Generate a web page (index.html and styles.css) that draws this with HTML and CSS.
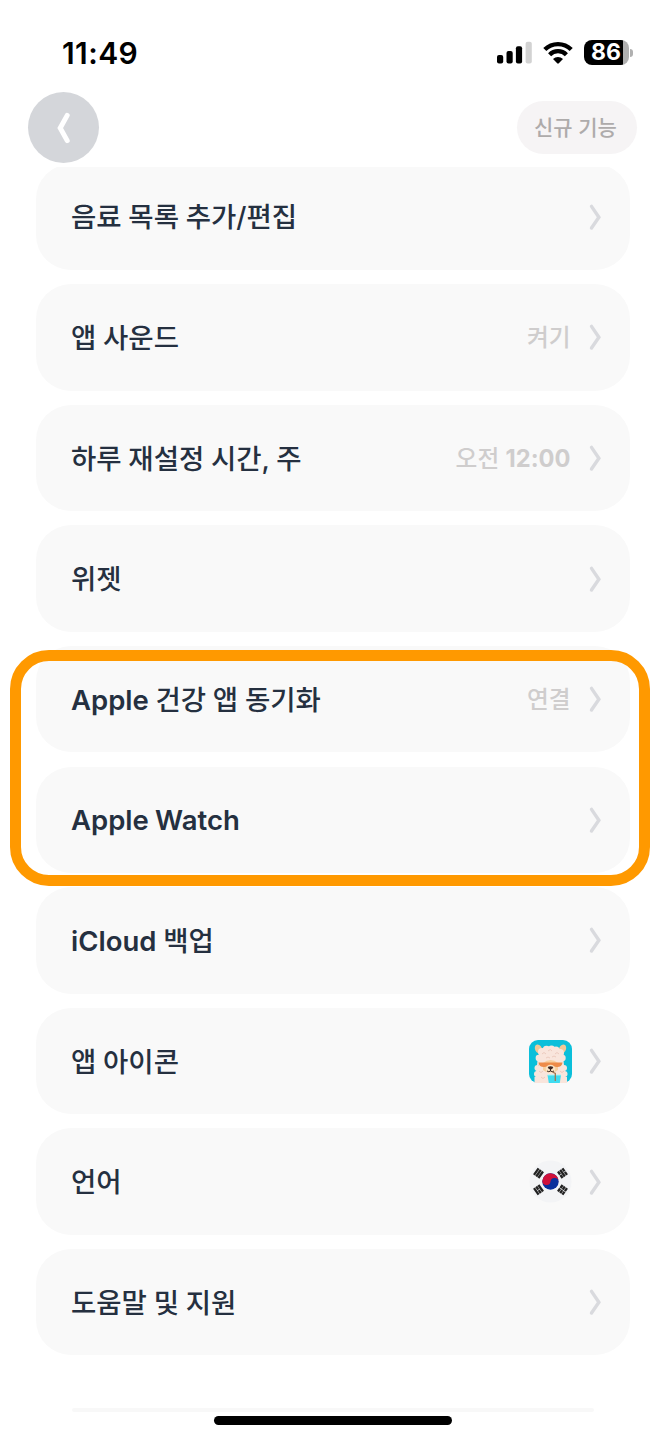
FILE: index.html
```html
<!DOCTYPE html>
<html lang="ko">
<head>
    <meta charset="UTF-8">
    <meta name="viewport" content="width=device-width, initial-scale=1.0">
    <title>설정</title>
    <link rel="stylesheet" href="styles.css">
</head>
<body>

    <!-- Shared chevron -->
    <svg class="defs" width="0" height="0">
        <symbol id="chevron" viewBox="0 0 14 28">
            <path d="M3.5 3.4 L10.9 14.2 L3.5 25" fill="none" stroke="#d9dade" stroke-width="3.4" stroke-linecap="round" stroke-linejoin="miter"/>
        </symbol>
    </svg>

    <!-- Status bar -->
    <div class="status-bar">
        <span class="time">11:49</span>
        <div class="status-icons">
            <svg class="signal" width="36" height="24" viewBox="0 0 36 24">
                <rect x="0" y="14" width="6.2" height="8.6" rx="2"/>
                <rect x="9.5" y="10" width="6.2" height="12.6" rx="2"/>
                <rect x="18.9" y="5.2" width="6.2" height="17.4" rx="2"/>
                <rect x="28.6" y="0.8" width="6.2" height="21.8" rx="2" fill="#d2d2d2"/>
            </svg>
            <svg class="wifi" width="30" height="24" viewBox="0 0 30 24">
                <path d="M1.8 8.6 C9 1.2 21 1.2 28.2 8.6" fill="none" stroke="#000" stroke-width="4.3"/>
                <path d="M6.6 13.7 C11.2 9 18.8 9 23.4 13.7" fill="none" stroke="#000" stroke-width="4.3"/>
                <path d="M10 18.1 C12.8 15.4 17.2 15.4 20 18.1 L15.8 22.3 Q15 23 14.2 22.3 Z"/>
            </svg>
            <div class="battery">86</div>
            <div class="battery-cap"></div>
        </div>
    </div>

    <!-- Header -->
    <header>
        <a class="back" href="#">
            <svg width="20" height="36" viewBox="0 0 20 36">
                <path d="M13.2 5.4 L6.2 18 L13.2 30.6" fill="none" stroke="#fff" stroke-width="5" stroke-linecap="round" stroke-linejoin="miter"/>
            </svg>
        </a>
        <a class="whats-new" href="#">신규 기능</a>
    </header>

    <!-- Settings list -->
    <main>
        <a class="row" href="#">
            <span class="label">음료 목록 추가/편집</span>
            <svg class="chevron"><use href="#chevron"/></svg>
        </a>
        <a class="row" href="#">
            <span class="label">앱 사운드</span>
            <span class="value">켜기</span>
            <svg class="chevron"><use href="#chevron"/></svg>
        </a>
        <a class="row" href="#">
            <span class="label">하루 재설정 시간, 주</span>
            <span class="value">오전 <b>12:00</b></span>
            <svg class="chevron"><use href="#chevron"/></svg>
        </a>
        <a class="row" href="#">
            <span class="label">위젯</span>
            <svg class="chevron"><use href="#chevron"/></svg>
        </a>
        <a class="row" href="#">
            <span class="label"><b>Apple</b> 건강 앱 동기화</span>
            <span class="value">연결</span>
            <svg class="chevron"><use href="#chevron"/></svg>
        </a>
        <a class="row" href="#">
            <span class="label"><b>Apple Watch</b></span>
            <svg class="chevron"><use href="#chevron"/></svg>
        </a>
        <a class="row" href="#">
            <span class="label"><b>iCloud</b> 백업</span>
            <svg class="chevron"><use href="#chevron"/></svg>
        </a>
        <a class="row" href="#">
            <span class="label">앱 아이콘</span>
            <!-- Alpaca with a drink -->
            <svg class="app-icon" viewBox="0 0 43 43">
                <rect width="43" height="43" rx="9" fill="#0bbfda"/>
                <ellipse cx="9.5" cy="9" rx="3.4" ry="4.8" fill="#f0c896" transform="rotate(-25 9.5 9)"/>
                <ellipse cx="33.5" cy="9" rx="3.4" ry="4.8" fill="#f0c896" transform="rotate(25 33.5 9)"/>
                <g fill="#f9e5dc">
                    <path d="M9 16 Q21 4 34 16 L37 43 H6 Z"/>
                    <circle cx="13" cy="12" r="4"/>
                    <circle cx="17.5" cy="9.5" r="3.8"/>
                    <circle cx="22.5" cy="9" r="3.6"/>
                    <circle cx="27" cy="10" r="3.6"/>
                    <circle cx="31" cy="13" r="4"/>
                    <circle cx="9.8" cy="18" r="3.2"/>
                    <circle cx="33.5" cy="18" r="3.2"/>
                    <circle cx="8.5" cy="28" r="3"/>
                    <circle cx="8" cy="34" r="3"/>
                    <path d="M5.5 37 H38 V43 H5.5 Z"/>
                    <circle cx="35" cy="28" r="3"/>
                    <circle cx="35.5" cy="34" r="3"/>
                </g>
                <g fill="none" stroke="#eac7bb" stroke-width="0.9">
                    <path d="M13 14 q2 -3 4 0 M19 11 q2.5 -3 4 0 M26 14 q2 -3 4 0 M17 18 q2 -2 4 0 M23 17 q2 -2 4 0"/>
                    <path d="M10 31 q2 3 4 0 M12 37 q2 3 4 0 M31 31 q2 3 4 0 M9 25.5 q1.5 -2 3 0"/>
                </g>
                <path d="M14 23 Q21.5 17 29 23 V30 Q21.5 36 14 30 Z" fill="#f7cf9e"/>
                <path d="M9.5 22.5 H33.5 Q33 27 28 27 Q24 27 21.5 25 Q19 27 15 27 Q10 27 9.5 22.5 Z" fill="#ee8b48"/>
                <ellipse cx="21.5" cy="29" rx="4.8" ry="4.2" fill="#fbe3c3"/>
                <path d="M18.7 27 Q21.5 25.6 24.3 27 Q23.5 29.5 21.5 29.5 Q19.5 29.5 18.7 27 Z" fill="#3d2723"/>
                <path d="M21.5 29 V31 M18 31 Q19.8 32.4 21.5 31 Q23.2 32.4 25 31" fill="none" stroke="#3d2723" stroke-width="1"/>
                <path d="M18.5 35 H32 L30.8 43 H19.8 Z" fill="#3fdcf0"/>
                <path d="M18.5 35 H32" stroke="#a8f3f8" stroke-width="1"/>
                <path d="M23.5 32 L26.3 33.3 V41" fill="none" stroke="#a2774f" stroke-width="1.3"/>
            </svg>
            <svg class="chevron"><use href="#chevron"/></svg>
        </a>
        <a class="row" href="#">
            <span class="label">언어</span>
            <!-- Flag of Korea -->
            <svg class="app-icon" viewBox="0 0 43 43">
                <circle cx="21.5" cy="21.5" r="21" fill="#f3f4f6"/>
                <circle cx="21.5" cy="21.5" r="8.2" fill="#0a2f9c"/>
                <path d="M13.3 21.5 A8.2 8.2 0 0 1 29.7 21.5 A4.1 4.1 0 0 0 21.5 21.5 A4.1 4.1 0 0 1 13.3 21.5 Z" fill="#d0103a" transform="rotate(8 21.5 21.5)"/>
                <g stroke="#222" stroke-width="2.3">
                    <path transform="translate(9.5 13.2) rotate(-55)" d="M-4 -2.7 H4 M-4 0 H4 M-4 2.7 H4"/>
                    <path transform="translate(33.5 29.8) rotate(-55)" d="M-4 -2.7 H-.3 M.3 -2.7 H4 M-4 0 H-.3 M.3 0 H4 M-4 2.7 H-.3 M.3 2.7 H4"/>
                    <path transform="translate(33.5 13.2) rotate(55)" d="M-4 -2.7 H-.3 M.3 -2.7 H4 M-4 0 H4 M-4 2.7 H-.3 M.3 2.7 H4"/>
                    <path transform="translate(9.5 29.8) rotate(55)" d="M-4 -2.7 H4 M-4 0 H-.3 M.3 0 H4 M-4 2.7 H4"/>
                </g>
            </svg>
            <svg class="chevron"><use href="#chevron"/></svg>
        </a>
        <a class="row" href="#">
            <span class="label">도움말 및 지원</span>
            <svg class="chevron"><use href="#chevron"/></svg>
        </a>
    </main>

    <div class="divider"></div>
    <div class="home-indicator"></div>

    <!-- Highlight over the two Apple rows -->
    <div class="highlight"></div>

</body>
</html>
```

FILE: styles.css
```css
body {
    font-family: 'Inter', 'Noto Sans CJK KR', sans-serif;
    margin: 0;
    padding: 0;
    height: 1440px;
    position: relative;
    overflow: hidden;
    background-color: #fff;
}

a {
    color: inherit;
    text-decoration: none;
}

.defs {
    display: block;
}

/* Status bar */
.status-bar {
    display: flex;
    justify-content: space-between;
    align-items: center;
    height: 92px;
    padding: 13px 33px 0 62px;
    box-sizing: border-box;
}

.time {
    font-size: 30px;
    font-weight: 600;
    letter-spacing: 0.4px;
    color: #000;
}

.status-icons {
    display: flex;
    align-items: center;
}

.wifi {
    margin-left: 10px;
}

/* Black up to the charge level, grey for the rest */
.battery {
    width: 45px;
    height: 25px;
    line-height: 25px;
    margin-left: 11px;
    padding-left: 7px;
    box-sizing: border-box;
    border-radius: 8px;
    font-size: 23px;
    font-weight: 700;
    color: #fff;
    background: linear-gradient(to right, #000 39px, #b0b0b0 39px);
}

.battery-cap {
    width: 3px;
    height: 8px;
    margin-left: 1px;
    border-radius: 0 3px 3px 0;
    background-color: #b0b0b0;
}

/* Header */
header {
    display: flex;
    justify-content: space-between;
    align-items: center;
    height: 75px;
    padding: 0 29px 4px 28.4px;
    box-sizing: border-box;
}

.back {
    display: flex;
    align-items: center;
    justify-content: center;
    width: 71px;
    height: 71px;
    border-radius: 50%;
    background-color: #d4d6da;
}

.whats-new {
    width: 120px;
    height: 53px;
    padding-right: 3px;
    box-sizing: border-box;
    line-height: 54px;
    border-radius: 27px;
    text-align: center;
    font-size: 21px;
    font-weight: 500;
    color: #aeabab;
    background-color: #f6f4f5;
}

/* Settings list, the first row is scrolled slightly under the header */
main {
    display: flex;
    flex-direction: column;
    gap: 14.3px;
    padding: 0 36px;
    overflow: hidden;
}

.row {
    display: flex;
    align-items: center;
    height: 106.3px;
    flex-shrink: 0;
    padding: 0 28px 0 35px;
    box-sizing: border-box;
    border-radius: 35px;
    background-color: #f9f9f9;
}

.row:first-child {
    margin-top: -3.3px;
}

.label {
    flex: 1;
    padding-top: 1px;
    line-height: 40px;
    font-size: 27.5px;
    font-weight: 500;
    word-spacing: -0.6px;
    color: #253040;
}

.label b {
    font-weight: 600;
}

.value {
    padding-top: 2px;
    line-height: 40px;
    font-size: 23.7px;
    font-weight: 500;
    color: #cfcdcd;
}

.value b {
    font-weight: 700;
}

.chevron {
    width: 14px;
    height: 28px;
    margin-left: 17.5px;
}

.app-icon {
    width: 43px;
    height: 43px;
    margin-right: -1.5px;
}

.divider {
    height: 4px;
    margin: 53px 72px 0;
    border-radius: 2px;
    background-color: #f8f8f8;
}

.home-indicator {
    width: 238px;
    height: 9px;
    margin: 4px auto 0;
    border-radius: 5px;
    background-color: #000;
}

.highlight {
    position: absolute;
    top: 650px;
    left: 10px;
    width: 640px;
    height: 236px;
    box-sizing: border-box;
    border: 11px solid #ff9900;
    border-radius: 39px;
}
```
